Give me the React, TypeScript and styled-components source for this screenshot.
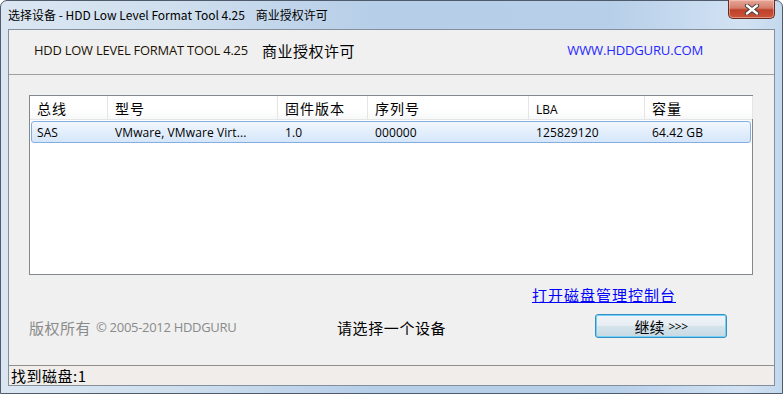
import React from "react";
import styled, { createGlobalStyle } from "styled-components";

const GlobalStyle = createGlobalStyle`
	html, body {
		margin: 0;
		padding: 0;
		background: #ffffff;
	}
	body {
		font-family: "Open Sans", "Noto Sans CJK SC", sans-serif;
	}
`;

const LATIN = `"Open Sans", "Noto Sans CJK SC", sans-serif`;
const CJK = `"Noto Sans CJK SC", "Open Sans", sans-serif`;

const Window = styled.div`
	box-sizing: border-box;
	width: 783px;
	height: 394px;
	display: flex;
	flex-direction: column;
	padding: 0 7px 7px 7px;
	border: 1px solid #4f5b6a;
	border-radius: 7px 7px 0 0;
	background: linear-gradient(
		90deg,
		#dbe6f2 0%,
		#cfdfee 22%,
		#b6cee8 48%,
		#b7cfe9 78%,
		#d2e2f3 95%,
		#c4d8ed 100%
	);
`;

const TitleBar = styled.div`
	height: 28px;
	display: flex;
	align-items: flex-start;
	justify-content: space-between;
`;

const TitleText = styled.div`
	font-family: ${CJK};
	font-size: 12px;
	line-height: 16px;
	color: #000;
	padding-top: 6px;
	white-space: pre;
`;

const CloseButton = styled.div`
	width: 47px;
	height: 19px;
	margin-top: -1px;
	box-sizing: border-box;
	border: 1px solid #6b2b20;
	border-top: none;
	border-radius: 0 0 5px 5px;
	background: linear-gradient(#e7a798 0%, #d47e6b 45%, #c0402a 55%, #c9553a 100%);
	box-shadow: inset 0 0 0 1px rgba(255, 220, 210, 0.45);
	display: flex;
	align-items: center;
	justify-content: center;
`;

const Client = styled.div`
	flex: 1;
	display: flex;
	flex-direction: column;
	border: 1px solid #838f9c;
	background: #f0f0f0;
`;

const Header = styled.div`
	height: 45px;
	box-sizing: border-box;
	border-bottom: 1px solid #a0a0a0;
	display: flex;
	align-items: center;
	padding: 0 0 4px 25px;
`;

const ProductName = styled.span`
	font-family: ${LATIN};
	font-size: 12.9px;
	color: #1b1205;
	letter-spacing: -0.2px;
`;

const License = styled.span`
	font-family: ${CJK};
	font-size: 15px;
	color: #000;
	margin-left: 14px;
	letter-spacing: 0.5px;
`;

const Site = styled.span`
	font-family: ${LATIN};
	font-size: 13.1px;
	color: #2626ff;
	margin-left: auto;
	margin-right: 71px;
	letter-spacing: -0.2px;
`;

const Body = styled.div`
	flex: 1;
	display: flex;
	flex-direction: column;
	padding: 20px 21px 0 20px;
`;

const Table = styled.div`
	height: 180px;
	box-sizing: border-box;
	border: 1px solid #828790;
	background: #fff;
`;

const COLS = "78px 170px 90px 161px 116px 108px";

const HeadRow = styled.div`
	display: grid;
	grid-template-columns: ${COLS};
	height: 24px;
	box-sizing: border-box;
	border-bottom: 1px solid #e5e5e5;
	background: linear-gradient(#ffffff, #ffffff 60%, #f7f8f9);
`;

const HeadCell = styled.div`
	display: flex;
	align-items: center;
	padding-left: 7px;
	border-right: 1px solid #e5e5e5;
	font-family: ${CJK};
	font-size: 14px;
	letter-spacing: 1px;
	color: #000;
`;

const HeadLatin = styled(HeadCell)`
	font-family: ${LATIN};
	font-size: 12px;
	letter-spacing: 0;
	padding-top: 3px;
`;

const DataRow = styled.div<{ $selected?: boolean }>`
	display: grid;
	grid-template-columns: ${COLS};
	height: 22px;
	box-sizing: border-box;
	margin: 1px 1px 0 1px;
	border: 1px solid ${(p) => (p.$selected ? "#87ade0" : "transparent")};
	border-radius: 3px;
	background: ${(p) =>
		p.$selected ? "linear-gradient(#f1f7fe, #d5e6fa)" : "transparent"};
`;

const Cell = styled.div`
	display: flex;
	align-items: center;
	padding-left: 5px;
	font-family: ${LATIN};
	font-size: 12px;
	letter-spacing: 0.1px;
	color: #000;
	white-space: nowrap;
	overflow: hidden;
`;

const LinkRow = styled.div`
	height: 20px;
	margin-top: 10px;
	display: flex;
	justify-content: flex-end;
	padding-right: 77px;
`;

const ConsoleLink = styled.a`
	font-family: ${CJK};
	font-size: 15px;
	line-height: 20px;
	letter-spacing: 1px;
	color: #0000ff;
	text-decoration: underline;
	cursor: pointer;
`;

const BottomRow = styled.div`
	margin-top: 9px;
	height: 24px;
	display: flex;
	align-items: center;
`;

const Copyright = styled.div`
	width: 308px;
	color: #8a8a8a;
	display: flex;
	align-items: center;
	padding-top: 2px;
`;

const CopyCjk = styled.span`
	font-family: ${CJK};
	font-size: 15px;
	letter-spacing: 0.5px;
`;

const CopyLatin = styled.span`
	font-family: ${LATIN};
	font-size: 13px;
	letter-spacing: -0.3px;
	margin-left: 5px;
`;

const Message = styled.div`
	flex: 1;
	font-family: ${CJK};
	font-size: 15px;
	letter-spacing: 0.6px;
	color: #000;
	padding-top: 2px;
`;

const ContinueButton = styled.button`
	width: 132px;
	height: 24px;
	margin-right: 26px;
	box-sizing: border-box;
	border: 1px solid #3a8cc4;
	border-radius: 3px;
	box-shadow: inset 0 0 0 1px #6fd3f7;
	background: linear-gradient(#f1f4f7 0%, #e6edf2 48%, #d5e3eb 52%, #c7d9e3 100%);
	display: flex;
	align-items: center;
	justify-content: center;
	gap: 4px;
	padding: 0;
	font-family: ${CJK};
	font-size: 15px;
	color: #000;
`;

const Arrows = styled.span`
	font-family: ${LATIN};
	font-size: 12px;
	letter-spacing: -0.5px;
`;

const StatusBar = styled.div`
	height: 20px;
	box-sizing: border-box;
	border-top: 1px solid #8f8f8f;
	background: #f0edeb;
	display: flex;
	align-items: center;
	padding-left: 2px;
	font-family: ${CJK};
	font-size: 15px;
	letter-spacing: 0.5px;
	color: #000;
`;

const columns = ["总线", "型号", "固件版本", "序列号", "LBA", "容量"];
const disks = [
	["SAS", "VMware, VMware Virt...", "1.0", "000000", "125829120", "64.42 GB"],
];

export default function App() {
	return (
		<>
			<GlobalStyle />
			<Window>
				<TitleBar>
					<TitleText>
						选择设备 - HDD Low Level Format Tool 4.25{"    "}商业授权许可
					</TitleText>
					<CloseButton>
						<svg width="16" height="11" viewBox="0 0 16 11">
							<path
								d="M3 1.5 L13 9.5 M13 1.5 L3 9.5"
								stroke="#3b3b3b"
								strokeWidth="4.2"
								strokeLinecap="round"
							/>
							<path
								d="M3 1.5 L13 9.5 M13 1.5 L3 9.5"
								stroke="#ffffff"
								strokeWidth="2.4"
								strokeLinecap="round"
							/>
						</svg>
					</CloseButton>
				</TitleBar>
				<Client>
					<Header>
						<ProductName>HDD LOW LEVEL FORMAT TOOL 4.25</ProductName>
						<License>商业授权许可</License>
						<Site>WWW.HDDGURU.COM</Site>
					</Header>
					<Body>
						<Table>
							<HeadRow>
								{columns.map((c) =>
									c === "LBA" ? (
										<HeadLatin key={c}>{c}</HeadLatin>
									) : (
										<HeadCell key={c}>{c}</HeadCell>
									)
								)}
							</HeadRow>
							{disks.map((d, i) => (
								<DataRow key={i} $selected={i === 0}>
									{d.map((v, j) => (
										<Cell key={j}>{v}</Cell>
									))}
								</DataRow>
							))}
						</Table>
						<LinkRow>
							<ConsoleLink>打开磁盘管理控制台</ConsoleLink>
						</LinkRow>
						<BottomRow>
							<Copyright>
								<CopyCjk>版权所有</CopyCjk>
								<CopyLatin>© 2005-2012 HDDGURU</CopyLatin>
							</Copyright>
							<Message>请选择一个设备</Message>
							<ContinueButton>
								继续<Arrows>&gt;&gt;&gt;</Arrows>
							</ContinueButton>
						</BottomRow>
					</Body>
					<StatusBar>找到磁盘:1</StatusBar>
				</Client>
			</Window>
		</>
	);
}
